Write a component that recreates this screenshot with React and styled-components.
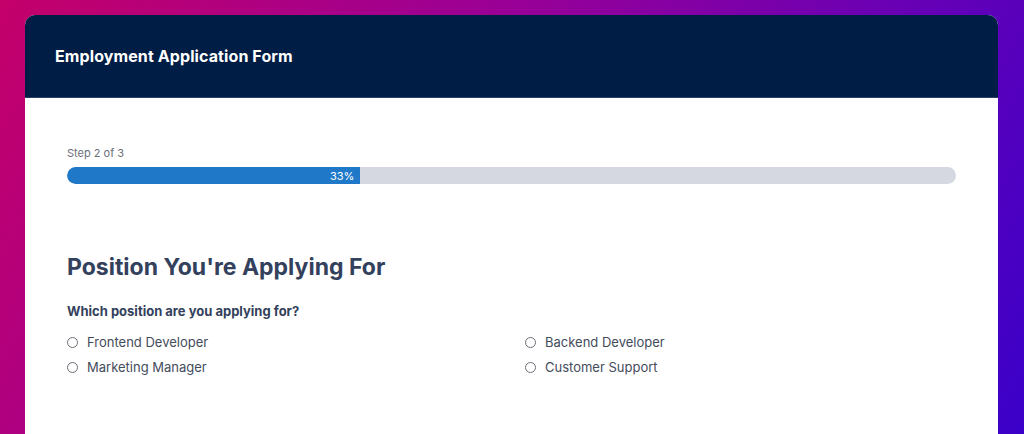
import React, { useState } from "react";
import styled, { createGlobalStyle } from "styled-components";

const GlobalStyle = createGlobalStyle`
  html, body {
    margin: 0;
    padding: 0;
    overflow: hidden;
  }
  body {
    font-family: Inter, "Noto Sans", "Liberation Sans", sans-serif;
    background: linear-gradient(120deg, #c4006a 0%, #9a0096 40%, #6a00b4 70%, #3a00c9 100%);
  }
`;

const positions = [
  "Frontend Developer",
  "Backend Developer",
  "Marketing Manager",
  "Customer Support",
];

function App() {
  const [selected, setSelected] = useState(null);
  const progress = 33;

  return (
    <>
      <GlobalStyle />
      <Page>
        <Card>
          <Header>
            <HeaderTitle>Employment Application Form</HeaderTitle>
          </Header>
          <Body>
            <StepLabel>Step 2 of 3</StepLabel>
            <Track>
              <Fill style={{ width: `${progress}%` }}>
                <FillText>{progress}%</FillText>
              </Fill>
            </Track>

            <SectionTitle>Position You're Applying For</SectionTitle>
            <Question>Which position are you applying for?</Question>
            <Options>
              {positions.map((p) => (
                <Option key={p}>
                  <Radio
                    type="radio"
                    name="position"
                    checked={selected === p}
                    onChange={() => setSelected(p)}
                  />
                  <OptionText>{p}</OptionText>
                </Option>
              ))}
            </Options>
          </Body>
        </Card>
      </Page>
    </>
  );
}

export default App;

const Page = styled.div`
  padding: 15px 26px 0 25px;
  height: 434px;
  box-sizing: border-box;
  display: flex;
  flex-direction: column;
`;

const Card = styled.div`
  flex: 1;
  background: #ffffff;
  border-radius: 10px 10px 0 0;
  overflow: hidden;
`;

const Header = styled.div`
  background: #001d45;
  height: 83px;
  display: flex;
  align-items: center;
  padding: 0 30px;
  border-bottom: 1px solid #2a3f6a;
  box-sizing: border-box;
`;

const HeaderTitle = styled.h1`
  margin: 0;
  color: #ffffff;
  font-size: 16px;
  font-weight: 700;
  letter-spacing: 0.1px;
`;

const Body = styled.div`
  padding: 48px 42px 0 42px;
`;

const StepLabel = styled.div`
  font-size: 11px;
  color: #6b6f7a;
  margin-bottom: 7px;
`;

const Track = styled.div`
  height: 17px;
  background: #d5d8e0;
  border-radius: 9px;
  overflow: hidden;
`;

const Fill = styled.div`
  height: 100%;
  background: #1f78c8;
  border-radius: 9px 0 0 9px;
  display: flex;
  align-items: center;
  justify-content: flex-end;
  padding-right: 6px;
  box-sizing: border-box;
`;

const FillText = styled.span`
  color: #ffffff;
  font-size: 11px;
`;

const SectionTitle = styled.h2`
  margin: 68px 0 0;
  font-size: 23px;
  font-weight: 700;
  color: #33415c;
  line-height: 30px;
`;

const Question = styled.div`
  margin-top: 21px;
  font-size: 13px;
  font-weight: 700;
  color: #33415c;
`;

const Options = styled.div`
  margin-top: 15px;
  display: grid;
  grid-template-columns: 458px 1fr;
  row-gap: 9px;
`;

const Option = styled.label`
  display: flex;
  align-items: center;
  gap: 9px;
  cursor: pointer;
`;

const Radio = styled.input`
  appearance: none;
  margin: 0;
  width: 11px;
  height: 11px;
  border: 1px solid #6b6f78;
  border-radius: 50%;
  box-sizing: border-box;
  background: #fff;
  &:checked {
    border-color: #1f78c8;
    box-shadow: inset 0 0 0 2px #fff;
    background: #1f78c8;
  }
`;

const OptionText = styled.span`
  font-size: 13px;
  color: #444c5c;
  line-height: 16px;
`;
